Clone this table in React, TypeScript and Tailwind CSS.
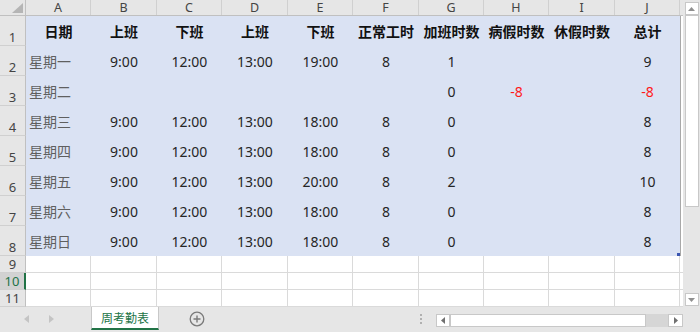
import React from 'react';

type Cell = string | { v: string; red?: boolean };

const colLetters = ['A', 'B', 'C', 'D', 'E', 'F', 'G', 'H', 'I', 'J'];
const colW = [
  'w-[65px]', 'w-[66px]', 'w-[65px]', 'w-[66px]', 'w-[65px]',
  'w-[66px]', 'w-[65px]', 'w-[65px]', 'w-[66px]', 'w-[65px]',
];

const headers = ['日期', '上班', '下班', '上班', '下班', '正常工时', '加班时数', '病假时数', '休假时数', '总计'];

const rows: Cell[][] = [
  ['星期一', '9:00', '12:00', '13:00', '19:00', '8', '1', '', '', '9'],
  ['星期二', '', '', '', '', '', '0', { v: '-8', red: true }, '', { v: '-8', red: true }],
  ['星期三', '9:00', '12:00', '13:00', '18:00', '8', '0', '', '', '8'],
  ['星期四', '9:00', '12:00', '13:00', '18:00', '8', '0', '', '', '8'],
  ['星期五', '9:00', '12:00', '13:00', '20:00', '8', '2', '', '', '10'],
  ['星期六', '9:00', '12:00', '13:00', '18:00', '8', '0', '', '', '8'],
  ['星期日', '9:00', '12:00', '13:00', '18:00', '8', '0', '', '', '8'],
];

const RowHead: React.FC<{ n: number; h: string; selected?: boolean }> = ({ n, h, selected }) => (
  <div
    className={`w-[26px] ${h} shrink-0 flex items-end justify-center text-[13px] leading-[16px] border-b border-[#d0d0d0] ${
      selected
        ? 'bg-[#d2d2d2] text-[#217346] border-r-2 border-r-[#217346]'
        : 'bg-[#e6e6e6] text-[#444] border-r border-r-[#c0c0c0]'
    }`}
  >
    {n}
  </div>
);

const TriLeft = () => (
  <svg width="6" height="8" viewBox="0 0 6 8"><path d="M5 0 L0 4 L5 8 Z" fill="currentColor" /></svg>
);
const TriRight = () => (
  <svg width="6" height="8" viewBox="0 0 6 8"><path d="M0 0 L5 4 L0 8 Z" fill="currentColor" /></svg>
);

const App: React.FC = () => {
  return (
    <div className="w-[700px] h-[332px] flex flex-col overflow-hidden bg-[#e6e6e6] font-['Noto_Sans','Noto_Sans_CJK_SC',sans-serif]">
      <div className="flex h-[307px]">
        {/* Sheet grid */}
        <div className="w-[683px] flex flex-col bg-white">
          {/* Column letters */}
          <div className="flex h-[16px] bg-[#e6e6e6] border-b border-[#c0c0c0]">
            <div className="w-[26px] shrink-0 border-r border-[#c0c0c0] flex items-end justify-end pr-[2px] pb-[2px]">
              <svg width="11" height="10" viewBox="0 0 11 10"><path d="M11 0 L11 10 L0 10 Z" fill="#b5b5b5" /></svg>
            </div>
            {colLetters.map((c, i) => (
              <div key={c} className={`${colW[i]} shrink-0 border-r border-[#d0d0d0] flex items-center justify-center text-[12.5px] leading-[15px] text-[#444]`}>
                {c}
              </div>
            ))}
            <div className="flex-1" />
          </div>

          {/* Header row 1 */}
          <div className="flex h-[30px]">
            <RowHead n={1} h="h-[30px]" />
            {headers.map((t, i) => (
              <div key={i} className={`${colW[i]} shrink-0 bg-[#dae2f3] flex items-center justify-center text-[14px] font-bold text-[#111]`}>
                {t}
              </div>
            ))}
            <div className="flex-1 border-l border-[#a8a8a8]" />
          </div>

          {/* Data rows 2-8 */}
          {rows.map((r, ri) => (
            <div key={ri} className="flex h-[30px]">
              <RowHead n={ri + 2} h="h-[30px]" />
              {r.map((cell, ci) => {
                const v = typeof cell === 'string' ? cell : cell.v;
                const red = typeof cell !== 'string' && cell.red;
                const last = ri === rows.length - 1 && ci === 9;
                return (
                  <div
                    key={ci}
                    className={`${colW[ci]} shrink-0 bg-[#dae2f3] flex items-center text-[14px] relative ${
                      ci === 0 ? 'justify-start pl-[3px] text-[#5f5f5f]' : 'justify-center'
                    } ${red ? 'text-[#ff1a1a]' : ci === 0 ? '' : 'text-[#262626]'}`}
                  >
                    {v}
                    {last && <span className="absolute right-0 bottom-0 w-[3px] h-[3px] bg-[#3a55b0]" />}
                  </div>
                );
              })}
              <div className="flex-1 border-l border-[#a8a8a8]" />
            </div>
          ))}

          {/* Empty rows 9-11 */}
          {[9, 10, 11].map((n) => (
            <div key={n} className="flex h-[17px]">
              <RowHead n={n} h="h-[17px]" selected={n === 10} />
              {colW.map((w, i) => (
                <div key={i} className={`${w} shrink-0 border-r border-b border-[#dadada]`} />
              ))}
              <div className="flex-1 border-b border-[#dadada]" />
            </div>
          ))}
        </div>

        {/* Vertical scrollbar */}
        <div className="w-[17px] flex flex-col items-center bg-[#e6e6e6] pt-[2px]">
          <div className="w-[14px] h-[13px] bg-white border border-[#c8c8c8] flex items-center justify-center text-[#909090]">
            <svg width="7" height="4" viewBox="0 0 7 4"><path d="M0 4 L3.5 0 L7 4 Z" fill="currentColor" /></svg>
          </div>
          <div className="w-[14px] h-[192px] bg-white border border-[#c8c8c8]" />
          <div className="flex-1" />
          <div className="w-[14px] h-[13px] bg-white border border-[#c8c8c8] flex items-center justify-center text-[#909090] mb-[1px]">
            <svg width="7" height="4" viewBox="0 0 7 4"><path d="M0 0 L3.5 4 L7 0 Z" fill="currentColor" /></svg>
          </div>
        </div>
      </div>

      {/* Sheet tabs + horizontal scrollbar */}
      <div className="flex h-[25px] items-start bg-[#e6e6e6]">
        <div className="flex items-center gap-[19px] pl-[24px] w-[91px] h-[24px] text-[#c4c4c4]">
          <TriLeft />
          <TriRight />
        </div>
        <div className="w-[68px] h-[23px] bg-white border-x border-[#c8c8c8] border-b-2 border-b-[#217346] flex items-center justify-center text-[12px] text-[#217346] font-['Noto_Sans_CJK_SC',sans-serif]">
          周考勤表
        </div>
        <div className="ml-[30px] h-[24px] flex items-center">
          <svg width="16" height="16" viewBox="0 0 16 16">
            <circle cx="8" cy="8" r="6.8" fill="none" stroke="#7a7a7a" strokeWidth="1.3" />
            <path d="M8 4.5 V11.5 M4.5 8 H11.5" stroke="#7a7a7a" strokeWidth="1.4" />
          </svg>
        </div>
        <div className="flex-1" />
        <div className="h-[24px] flex flex-col justify-center gap-[2px] mr-[14px]">
          <span className="w-[2px] h-[2px] bg-[#b0b0b0]" />
          <span className="w-[2px] h-[2px] bg-[#b0b0b0]" />
          <span className="w-[2px] h-[2px] bg-[#b0b0b0]" />
        </div>
        <div className="mt-[7px] flex h-[13px] w-[247px] bg-[#d6d6d6]">
          <div className="w-[14px] h-[13px] bg-white border border-[#c8c8c8] flex items-center justify-center text-[#707070]">
            <svg width="4" height="7" viewBox="0 0 4 7"><path d="M4 0 L0 3.5 L4 7 Z" fill="currentColor" /></svg>
          </div>
          <div className="w-[196px] h-[13px] bg-white border border-[#c8c8c8]" />
          <div className="flex-1" />
          <div className="w-[15px] h-[13px] bg-white border border-[#c8c8c8] flex items-center justify-center text-[#707070]">
            <svg width="4" height="7" viewBox="0 0 4 7"><path d="M0 0 L4 3.5 L0 7 Z" fill="currentColor" /></svg>
          </div>
        </div>
        <div className="w-[17px]" />
      </div>
    </div>
  );
};

export default App;
